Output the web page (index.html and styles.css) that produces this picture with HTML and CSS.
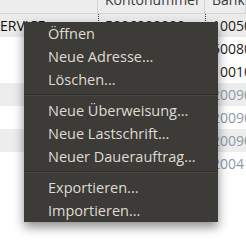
FILE: index.html
```html
<!DOCTYPE html>
<html>
<head>
    <title>Adressen</title>
    <link rel="stylesheet" href="styles.css">
</head>
<body>
    <div class="list">
        <div class="row head">
            <div class="cell c1"></div>
            <div class="cell c2">Kontonummer</div>
            <div class="cell c3">Bankleitzahl</div>
        </div>
        <div class="row selected focus">
            <div class="cell c1 name">ERVICE</div>
            <div class="cell c2">5006200000</div>
            <div class="cell c3">10050000</div>
        </div>
        <div class="row">
            <div class="cell c1"></div>
            <div class="cell c2"></div>
            <div class="cell c3">50080000</div>
        </div>
        <div class="row">
            <div class="cell c1"></div>
            <div class="cell c2"></div>
            <div class="cell c3">10010010</div>
        </div>
        <div class="row odd dim">
            <div class="cell c1"></div>
            <div class="cell c2"></div>
            <div class="cell c3">20090500</div>
        </div>
        <div class="row dim">
            <div class="cell c1"></div>
            <div class="cell c2"></div>
            <div class="cell c3">20090500</div>
        </div>
        <div class="row odd dim">
            <div class="cell c1"></div>
            <div class="cell c2"></div>
            <div class="cell c3">20090500</div>
        </div>
        <div class="row dim">
            <div class="cell c1"></div>
            <div class="cell c2"></div>
            <div class="cell c3">20041111</div>
        </div>
    </div>

    <div class="menu">
        <div class="item">Öffnen</div>
        <div class="item">Neue Adresse...</div>
        <div class="item">Löschen...</div>
        <div class="sep"></div>
        <div class="item">Neue Überweisung...</div>
        <div class="item">Neue Lastschrift...</div>
        <div class="item">Neuer Dauerauftrag...</div>
        <div class="sep"></div>
        <div class="item">Exportieren...</div>
        <div class="item">Importieren...</div>
    </div>
</body>
</html>
```

FILE: styles.css
```css
body { margin: 0; background: #fff; font-family: "Open Sans", "DejaVu Sans", sans-serif; font-size: 14px; overflow: hidden; }

.list { margin-top: -11px; }
.row { display: grid; grid-template-columns: 98px 107px 1fr; height: 23px; line-height: 23px; color: #222; white-space: nowrap; }
.row.odd { background: #ededed; }
.row.selected { background: #ebebeb; }
.row.dim { color: #8d99a8; }
.cell { overflow: hidden; padding-left: 7px; }
.cell.name { padding-left: 0; color: #111; }

.head { height: 24px; line-height: 22px; background: #ededed; border-bottom: 1px solid #d6d6d6; color: #3c3c3c; }
.head .cell { border-right: 1px solid #d4d4d4; }

.focus .c2, .focus .c3 { border-left: 1px dotted #333; padding-left: 6px; }

.menu { position: absolute; left: 24px; top: 22px; width: 194px; background: #3c3b37; color: #dfdbd2; font-size: 14.5px; box-shadow: 0 5px 10px rgba(0, 0, 0, 0.45); }
.item { height: 23px; line-height: 23px; padding-left: 24px; }
.sep { height: 8px; display: flex; align-items: center; }
.sep::before { content: ""; flex: 1; height: 1px; background: #2e2d2a; border-bottom: 1px solid #47463f; }
```
